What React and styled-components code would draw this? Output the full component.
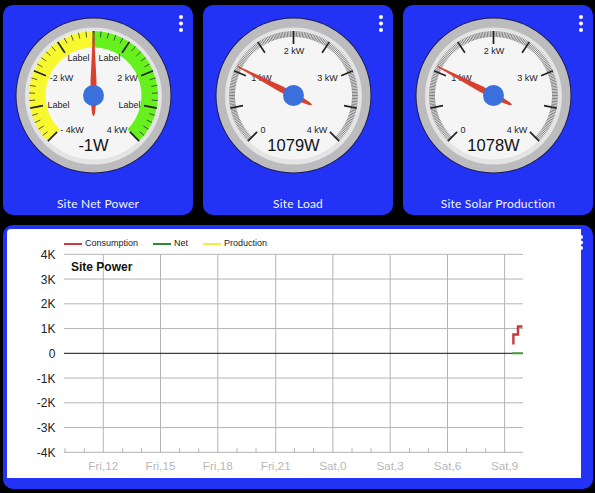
import React from 'react';
import styled, { createGlobalStyle } from 'styled-components';

const GlobalStyle = createGlobalStyle`
  html, body {
    margin: 0;
    padding: 0;
    background: #000;
  }
  body {
    font-family: "Liberation Sans", Arial, sans-serif;
  }
`;

const CX = 90.5;
const CY = 90.5;

// position on the dial, deg is clockwise from straight up
const polar = (deg, r) => {
  const a = (deg * Math.PI) / 180;
  return [CX + r * Math.sin(a), CY - r * Math.cos(a)];
};

const arcBand = (from, to, rIn, rOut) => {
  const [ax, ay] = polar(from, rOut);
  const [bx, by] = polar(to, rOut);
  const [cx, cy] = polar(to, rIn);
  const [dx, dy] = polar(from, rIn);
  return `M${ax} ${ay}A${rOut} ${rOut} 0 0 1 ${bx} ${by}L${cx} ${cy}A${rIn} ${rIn} 0 0 0 ${dx} ${dy}Z`;
};

// needle outline as [distance along the needle, half width]
const needleShape = [
  [63, 0.6],
  [14, 3],
  [-10, 2.3],
  [-18, 1.4],
  [-20.5, 0.4],
];

const needlePoints = (deg) => {
  const a = (deg * Math.PI) / 180;
  const ux = Math.sin(a);
  const uy = -Math.cos(a);
  const side = (sign) =>
    needleShape.map(([d, w]) => `${CX + ux * d - uy * w * sign},${CY + uy * d + ux * w * sign}`);
  return [...side(1), ...side(-1).reverse()].join(' ');
};

const Dial = ({ labels, value, needle, bands, minorPerMajor, minorColor }) => {
  const majors = [];
  for (let i = 0; i <= 8; i++) majors.push(-135 + i * 33.75);
  const minors = [];
  for (let i = 0; i < 8 * minorPerMajor; i++) {
    if (i % minorPerMajor !== 0) minors.push(-135 + (i * 33.75) / minorPerMajor);
  }

  return (
    <DialSvg viewBox="0 0 190 210" width="190" height="210">
      <circle cx={CX} cy={CY} r="78" fill="#1a1a50" />
      <circle cx={CX} cy={CY} r="77" fill="#bcbcbe" />
      <circle cx={CX} cy={CY + 0.5} r="68.5" fill="#e4e4e4" />
      <circle cx={CX} cy={CY - 0.5} r="64.5" fill="#f5f5f5" />
      {bands.map((b) => (
        <path key={b.color} d={arcBand(b.from, b.to, 48, 64.5)} fill={b.color} />
      ))}
      {minors.map((deg) => {
        const [x1, y1] = polar(deg, 64.5);
        const [x2, y2] = polar(deg, 58.5);
        return <line key={deg} x1={x1} y1={y1} x2={x2} y2={y2} stroke={minorColor} strokeWidth="0.8" />;
      })}
      {majors.map((deg) => {
        const [x1, y1] = polar(deg, 64.5);
        const [x2, y2] = polar(deg, 51.5);
        return <line key={deg} x1={x1} y1={y1} x2={x2} y2={y2} stroke="#222" strokeWidth="1.7" />;
      })}
      {labels.map((l) => (
        <DialLabel key={l.text + l.x} x={l.x} y={l.y}>
          {l.text}
        </DialLabel>
      ))}
      <DialValue x={CX} y="146">
        {value}
      </DialValue>
      <polygon points={needlePoints(needle)} fill="#d8412e" />
      <circle cx={CX} cy={CY} r="10.5" fill="#3a6fdc" />
    </DialSvg>
  );
};

const netLabels = [
  { text: 'Label', x: 75.5, y: 55.5 },
  { text: 'Label', x: 106.5, y: 55.5 },
  { text: '-2 kW', x: 58.5, y: 76 },
  { text: '2 kW', x: 124.5, y: 76 },
  { text: 'Label', x: 55.5, y: 103 },
  { text: 'Label', x: 126.5, y: 103 },
  { text: '- 4kW', x: 69, y: 128 },
  { text: '4 kW', x: 114, y: 128 },
];

const loadLabels = [
  { text: '2 kW', x: 91, y: 49 },
  { text: '1 kW', x: 58.5, y: 76 },
  { text: '3 kW', x: 124.5, y: 76 },
  { text: '0', x: 60, y: 128 },
  { text: '4 kW', x: 114, y: 128 },
];

const gauges = [
  {
    title: 'Site Net Power',
    value: '-1W',
    needle: 0,
    labels: netLabels,
    bands: [
      { from: -135, to: 0, color: '#f8f82e' },
      { from: 0, to: 135, color: '#66f01e' },
    ],
    minorPerMajor: 5,
    minorColor: '#333',
  },
  { title: 'Site Load', value: '1079W', needle: -62.5, labels: loadLabels, bands: [], minorPerMajor: 24, minorColor: '#666' },
  { title: 'Site Solar Production', value: '1078W', needle: -62.5, labels: loadLabels, bands: [], minorPerMajor: 24, minorColor: '#666' },
];

const yTicks = [4, 3, 2, 1, 0, -1, -2, -3, -4];
const yPos = (v) => 353.3 - v * 24.75 - 229;
const gridX = [103.3, 160.5, 217.8, 275.7, 332.9, 390.2, 447.5, 504.6];
const xLabels = ['Fri,12', 'Fri,15', 'Fri,18', 'Fri,21', 'Sat,0', 'Sat,3', 'Sat,6', 'Sat,9'];
const minorX = [65, 84.3, 122.7, 141.5, 179.5, 198.7, 237, 256, 294.5, 313.5, 352, 371, 409.5, 428.5, 466.5, 485.7];

const legend = [
  { name: 'Consumption', color: '#cc3b3b' },
  { name: 'Net', color: '#2f8a2f' },
  { name: 'Production', color: '#f2ee3a' },
];

const PowerChart = () => (
  <ChartSvg viewBox="7 0 574 249" width="574" height="249">
    {gridX.map((x, i) => (
      <React.Fragment key={x}>
        <line x1={x} x2={x} y1={yPos(4)} y2={yPos(-4)} stroke="#b4b4b4" strokeWidth="1" />
        <XLabel x={x} y="241">
          {xLabels[i]}
        </XLabel>
      </React.Fragment>
    ))}
    {minorX.map((x) => (
      <line key={x} x1={x} x2={x} y1={yPos(-4) - 4} y2={yPos(-4)} stroke="#b4b4b4" strokeWidth="1" />
    ))}
    {yTicks.map((v) => (
      <React.Fragment key={v}>
        <line x1="64" x2="523" y1={yPos(v)} y2={yPos(v)} stroke={v === 0 ? '#111' : '#b4b4b4'} strokeWidth="1" />
        <YLabel x="55.5" y={yPos(v) + 4.5}>
          {v === 0 ? '0' : `${v}K`}
        </YLabel>
      </React.Fragment>
    ))}
    <ChartTitle x="71" y="42">
      Site Power
    </ChartTitle>
    <line x1="512" x2="523" y1={yPos(0)} y2={yPos(0)} stroke="#4d9a3f" strokeWidth="2" />
    <polyline
      points="513.4,115.5 513.4,105.5 518,105.5 518,97.5 522.5,97.5"
      fill="none"
      stroke="#c43c3c"
      strokeWidth="2.4"
    />
  </ChartSvg>
);

const App = () => (
  <>
    <GlobalStyle />
    <Page>
      <GaugeRow>
        {gauges.map((g) => (
          <GaugeCard key={g.title}>
            <Dial {...g} />
            <MenuDots />
            <GaugeTitle>{g.title}</GaugeTitle>
          </GaugeCard>
        ))}
      </GaugeRow>
      <ChartCard>
        <ChartPanel>
          <Legend>
            {legend.map((l) => (
              <LegendItem key={l.name}>
                <LegendLine $color={l.color} />
                {l.name}
              </LegendItem>
            ))}
          </Legend>
          <PowerChart />
        </ChartPanel>
        <MenuDots $top={10} $gap={5.5} />
      </ChartCard>
    </Page>
  </>
);

export default App;

const Page = styled.div`
  width: 595px;
  height: 493px;
  box-sizing: border-box;
  padding: 5px 2px 4px 3px;
  background: #000;
  display: flex;
  flex-direction: column;
  gap: 10px;
  overflow: hidden;
`;

const GaugeRow = styled.div`
  display: flex;
  gap: 10px;
`;

const GaugeCard = styled.div`
  position: relative;
  width: 190px;
  height: 210px;
  background: #2233f5;
  border-radius: 10px;
`;

const DialSvg = styled.svg`
  display: block;
`;

const DialLabel = styled.text`
  font-size: 9px;
  fill: #222;
  text-anchor: middle;
  font-family: "Liberation Sans", Arial, sans-serif;
`;

const DialValue = styled.text`
  font-size: 16.5px;
  fill: #111;
  text-anchor: middle;
  font-family: "Liberation Sans", Arial, sans-serif;
`;

const GaugeTitle = styled.div`
  position: absolute;
  left: 0;
  right: 0;
  bottom: 3px;
  text-align: center;
  color: #f2f4ff;
  font-family: Lato, "Open Sans", sans-serif;
  font-size: 12px;
  line-height: 16px;
  letter-spacing: 0.2px;
`;

const MenuDots = styled.span`
  position: absolute;
  top: ${({ $top }) => ($top === undefined ? 10 : $top)}px;
  right: 10px;
  width: 4px;
  height: 4px;
  border-radius: 50%;
  background: #fff;
  box-shadow: 0 ${({ $gap }) => $gap || 6.5}px 0 #fff, 0 ${({ $gap }) => ($gap || 6.5) * 2}px 0 #fff;
`;

const ChartCard = styled.div`
  position: relative;
  width: 590px;
  height: 264px;
  box-sizing: border-box;
  padding: 4px 12px 11px 4px;
  background: #2233f5;
  border-radius: 10px;
`;

const ChartPanel = styled.div`
  position: relative;
  width: 574px;
  height: 249px;
  background: #fff;
  border-radius: 4px 0 0 0;
`;

const ChartSvg = styled.svg`
  display: block;
`;

const Legend = styled.div`
  position: absolute;
  top: 9px;
  left: 57px;
  display: flex;
  gap: 15px;
  font-size: 9px;
  line-height: 11px;
  color: #222;
`;

const LegendItem = styled.div`
  display: flex;
  align-items: center;
  gap: 3px;
`;

const LegendLine = styled.span`
  width: 18px;
  height: 2px;
  background: ${({ $color }) => $color};
`;

const YLabel = styled.text`
  font-size: 12px;
  fill: #222;
  text-anchor: end;
  font-family: "Liberation Sans", Arial, sans-serif;
`;

const XLabel = styled.text`
  font-size: 11.7px;
  fill: #b8b8b8;
  text-anchor: middle;
  font-family: "Liberation Sans", Arial, sans-serif;
`;

const ChartTitle = styled.text`
  font-size: 12px;
  font-weight: bold;
  fill: #111;
  font-family: "Liberation Sans", Arial, sans-serif;
`;
